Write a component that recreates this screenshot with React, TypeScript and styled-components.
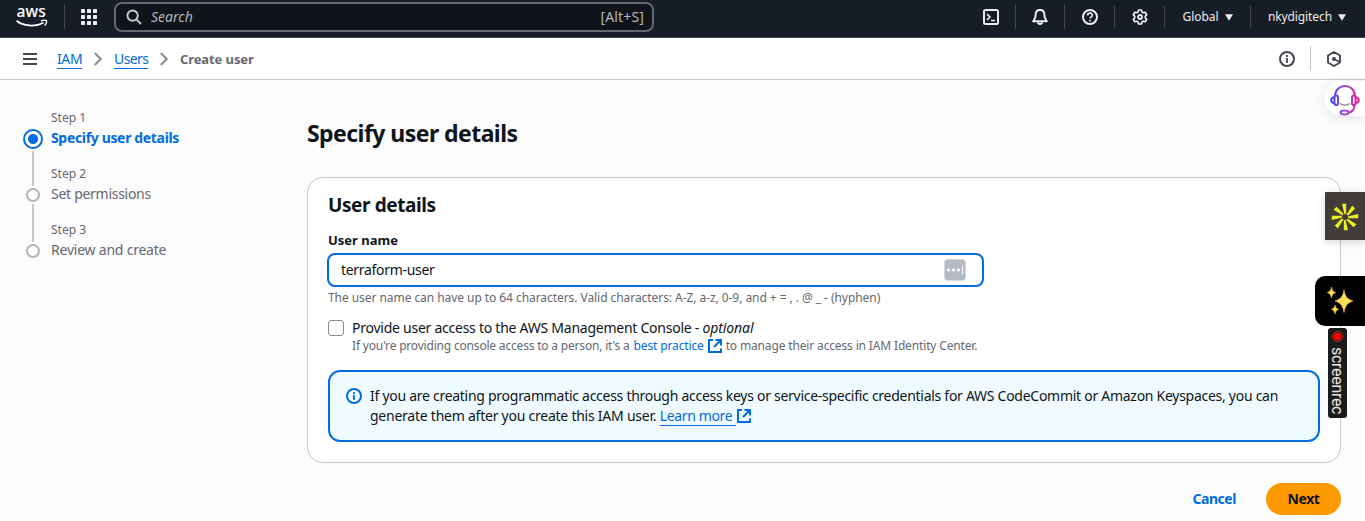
import React from "react";
import styled, { createGlobalStyle, css } from "styled-components";

const Global = createGlobalStyle`
  * { box-sizing: border-box; }
  html, body { margin: 0; background: #fcfcfd; overflow: hidden; }
  body { font-family: "Noto Sans", "Open Sans", sans-serif; font-size: 14px; line-height: 20px; color: #0f141a; }
  svg { display: block; flex: none; }
`;

const Page = styled.div`
  width: 1365px;
  height: 521px;
  overflow: hidden;
  display: flex;
  flex-direction: column;
`;

const Label = styled.span<{ $size?: number; $track?: number; $weight?: number; $color?: string; $italic?: boolean }>`
  white-space: nowrap;
  font-size: ${(p) => p.$size ?? 13}px;
  letter-spacing: ${(p) => p.$track ?? 0}px;
  font-weight: ${(p) => p.$weight ?? 400};
  font-style: ${(p) => (p.$italic ? "italic" : "normal")};
  ${(p) => p.$color && css`color: ${p.$color};`}
`;

const TopBar = styled.header`
  height: 38px;
  flex: none;
  background: #161d26;
  border-bottom: 1px solid #424650;
  display: flex;
  align-items: center;
  padding: 0 19px 3px 16px;
  color: #ebebf0;
`;

const Rule = styled.i<{ $h?: number; $light?: boolean }>`
  width: 1px;
  height: ${(p) => p.$h ?? 24}px;
  background: ${(p) => (p.$light ? "#c6c6cd" : "#424650")};
`;

const AppsSlot = styled.div`
  margin: 0 17px 0 16px;
`;

const Search = styled.div`
  width: 540px;
  height: 30px;
  border: 2px solid #656871;
  border-radius: 8px;
  background: #0f141a;
  display: flex;
  align-items: center;
  gap: 9px;
  padding: 0 8px 0 10px;
  color: #b4b4bb;
`;

const Grow = styled.div`
  flex: 1;
`;

const Space = styled.div<{ $w: number }>`
  flex: 0 0 ${(p) => p.$w}px;
`;

const TopTools = styled.div`
  display: flex;
  align-items: center;
`;

const Tool = styled.div<{ $w: number }>`
  width: ${(p) => p.$w}px;
  display: flex;
  align-items: center;
  justify-content: center;
  gap: 6px;
`;

const Crumbs = styled.nav`
  height: 42px;
  flex: none;
  background: #fff;
  border-bottom: 1px solid #c6c6cd;
  display: flex;
  align-items: center;
  padding: 0 23px;
`;

const CrumbLink = styled.a<{ $w: number }>`
  width: ${(p) => p.$w}px;
  height: 19px;
  line-height: 18px;
  margin-top: 2px;
  border-bottom: 1px solid #006ce0;
  color: #006ce0;
  white-space: nowrap;
`;

const CrumbList = styled.div`
  display: flex;
  align-items: center;
  gap: 11px;
  margin-left: 20px;
`;

const Body = styled.div`
  flex: 1;
  display: flex;
`;

const Steps = styled.aside`
  width: 307px;
  padding: 28px 0 0 23px;
`;

const Step = styled.div`
  height: 56px;
  display: grid;
  grid-template-columns: 20px 1fr;
  column-gap: 8px;
`;

const Marker = styled.div<{ $active?: boolean }>`
  display: flex;
  flex-direction: column;
  align-items: center;
  padding-top: ${(p) => (p.$active ? 21 : 24)}px;
`;

const Dot = styled.i<{ $active?: boolean }>`
  width: ${(p) => (p.$active ? 20 : 14)}px;
  height: ${(p) => (p.$active ? 20 : 14)}px;
  flex: none;
  border-radius: 50%;
  border: 2px solid ${(p) => (p.$active ? "#006ce0" : "#b4b4bb")};
  background: ${(p) => (p.$active ? "radial-gradient(circle, #006ce0 4.6px, #fff 5.4px)" : "#fff")};
`;

const Connector = styled.i<{ $h: number }>`
  width: 2px;
  height: ${(p) => p.$h}px;
  margin-top: 2px;
  margin-bottom: -30px;
  flex: none;
  background: #c6c6cd;
`;

const StepText = styled.div`
  display: flex;
  flex-direction: column;
`;

const Main = styled.main`
  width: 1034px;
  display: flex;
  flex-direction: column;
`;

const Title = styled.h1`
  margin: 38px 0 0;
  height: 59px;
  line-height: 30px;
  font-weight: 400;
  font-size: 24px;
`;

const Card = styled.section`
  height: 286px;
  border: 1px solid #c6c6cd;
  border-radius: 16px;
  background: #fff;
  padding: 14px 20px 0;
  display: flex;
  flex-direction: column;
`;

const CardTitle = styled.h2`
  margin: 0;
  height: 38px;
  line-height: 24px;
  font-weight: 400;
`;

const FieldLabel = styled.div`
  height: 23px;
`;

const Input = styled.div`
  width: 657px;
  height: 34px;
  margin-left: -1px;
  border: 2px solid #006ce0;
  border-radius: 8px;
  display: flex;
  align-items: center;
  justify-content: space-between;
  padding: 0 16px 0 12px;
`;

const Hint = styled.div`
  height: 33px;
  line-height: 16px;
  padding-top: 2px;
`;

const CheckRow = styled.div`
  height: 50px;
  display: flex;
  gap: 8px;
`;

const Checkbox = styled.i`
  width: 16px;
  height: 16px;
  border: 1px solid #8c8c94;
  border-radius: 3px;
  background: #fff;
`;

const CheckText = styled.div`
  display: flex;
  flex-direction: column;
  margin-top: -2px;
`;

const Line = styled.div<{ $h?: number; $gap?: number }>`
  display: flex;
  align-items: center;
  height: ${(p) => p.$h ?? 20}px;
  line-height: ${(p) => p.$h ?? 20}px;
  gap: ${(p) => p.$gap ?? 0}px;
`;

const Alert = styled.div`
  width: 992px;
  height: 72px;
  border: 2px solid #006ce0;
  border-radius: 12px;
  background: #f0fbff;
  display: flex;
  gap: 8px;
  padding: 14px 16px;
`;

const LearnMore = styled.a`
  height: 20px;
  width: 76px;
  margin-right: 1px;
  border-bottom: 1px solid #006ce0;
  color: #006ce0;
  line-height: 19px;
`;

const Actions = styled.div`
  height: 52px;
  padding-top: 20px;
  display: flex;
  justify-content: flex-end;
  align-items: center;
  gap: 30px;
`;

const NextButton = styled.button`
  width: 75px;
  height: 32px;
  padding: 0 0 1px;
  border: 0;
  border-radius: 16px;
  background: #ff9900;
  font-family: inherit;
  color: #0f141a;
`;

const Floating = styled.div<{ $top: number; $left: number }>`
  position: absolute;
  top: ${(p) => p.$top}px;
  left: ${(p) => p.$left}px;
  display: flex;
  align-items: center;
  justify-content: center;
`;

const SupportTab = styled(Floating)`
  width: 41px;
  height: 35px;
  padding-top: 3px;
  border-radius: 18px 0 0 18px;
  background: #fff;
  box-shadow: 0 2px 10px rgba(0, 0, 0, 0.1);
`;

const BurstTab = styled(Floating)`
  width: 40px;
  height: 48px;
  padding-top: 1px;
  background: #403c39;
  box-shadow: 0 2px 8px rgba(0, 0, 0, 0.16);
`;

const SparkTab = styled(Floating)`
  width: 50px;
  height: 50px;
  border-radius: 10px 0 0 10px;
  background: #000;
`;

const RecTab = styled(Floating)`
  width: 19px;
  height: 90px;
  border-radius: 3px;
  background: #1b1b1b;
  flex-direction: column;
  justify-content: flex-start;
  padding-top: 3px;
  gap: 5px;
`;

const RecText = styled.span`
  writing-mode: vertical-rl;
  line-height: 19px;
  font-family: Roboto, sans-serif;
  font-size: 16px;
  letter-spacing: -0.3px;
  color: #e6e6e6;
  white-space: nowrap;
`;

const AwsLogo = () => (
  <svg width="32" height="34" viewBox="0 -6 32 34">
    <text x="0.6" y="11.400" fontFamily="Noto Sans" fontSize="16" fontWeight="500" fill="#fff" textLength="29.200" lengthAdjust="spacingAndGlyphs">aws</text>
    <path d="M0.600 14.800C7 20.200 19.500 21.200 27.500 16.700" fill="none" stroke="#fff" strokeWidth="1.800" />
    <path d="M25 15c2-.9 4.600-.9 5.400-.4.4 1.200-.3 3.600-1.800 5" fill="none" stroke="#fff" strokeWidth="1.400" />
  </svg>
);

const AppsIcon = () => (
  <svg width="16" height="16" viewBox="0 0 16 16" fill="#ebebf0">
    {[0, 6, 12].map((y) => [0, 6, 12].map((x) => <rect key={`${x}-${y}`} x={x} y={y} width="4" height="4" rx=".4" />))}
  </svg>
);

type IconProps = { color?: string; children: React.ReactNode; size?: number };
const Icon = ({ color = "#ebebf0", size = 16, children }: IconProps) => (
  <svg width={size} height={size} viewBox="0 0 16 16" fill="none" stroke={color} strokeWidth="2" strokeLinejoin="round">
    {children}
  </svg>
);

const InfoIcon = ({ color }: { color: string }) => (
  <Icon color={color}>
    <circle cx="8" cy="8" r="7" />
    <path d="M8 7v5M8 4v2" strokeWidth="1.8" />
  </Icon>
);

const ExternalIcon = () => (
  <svg width="14" height="14" viewBox="0 0 14 14" fill="none" stroke="#006ce0" strokeWidth="2">
    <path d="M5 1H1v12h12V9.500M7.500 1H13v5.500M13 1 6 8" />
  </svg>
);

const Chevron = () => (
  <svg width="10" height="16" viewBox="0 0 10 16" fill="none" stroke="#8c8c94" strokeWidth="2">
    <path d="M1.800 2l6 6-6 6" />
  </svg>
);

const Caret = () => (
  <svg width="8" height="7" viewBox="0 0 8 7" fill="#ebebf0"><path d="M0 .3h8L4 6.800z" /></svg>
);

const steps = [
  { name: "Step 1", title: "Specify user details", track: -0.34 },
  { name: "Step 2", title: "Set permissions", track: -0.28 },
  { name: "Step 3", title: "Review and create", track: -0.22 },
];

export default function App() {
  return (
    <Page>
      <Global />
      <TopBar>
        <AwsLogo />
        <Space $w={16} />
        <Rule />
        <AppsSlot><AppsIcon /></AppsSlot>
        <Search>
          <Icon color="#c6c6cd">
            <circle cx="6.600" cy="6.600" r="5.200" />
            <path d="M10.400 10.400 15 15" />
          </Icon>
          <Label $italic $size={14}>Search</Label>
          <Grow />
          <Label $size={14} $track={0.15}>[Alt+S]</Label>
        </Search>
        <Grow />
        <TopTools>
          <Tool $w={48}>
            <Icon><rect x="1" y="1" width="14" height="14" rx="1.500" /><path d="M4 5l3 3-3 3M8 11.500h4" strokeWidth="1.700" /></Icon>
          </Tool>
          <Rule />
          <Tool $w={48}>
            <Icon><path d="M8 1C5.200 1 3.700 3 3.700 5.500 3.700 9 2.500 10 1.200 12.300h13.600C13.500 10 12.300 9 12.300 5.500 12.300 3 10.800 1 8 1z" strokeWidth="1.900" /><path d="M5.800 13.200c.3 2.400 4.100 2.400 4.400 0" strokeWidth="1.800" /></Icon>
          </Tool>
          <Rule />
          <Tool $w={49}>
            <Icon><circle cx="8" cy="8" r="7" /><path d="M5.600 6.400C5.600 3.400 10.400 3.400 10.400 6.200 10.400 7.800 8 7.800 8 9.600M8 10.700v1.800" strokeWidth="1.600" /></Icon>
          </Tool>
          <Rule $h={22} />
          <Tool $w={49}>
            <Icon>
              <path d="M6.600 1h2.800l.5 1.900 1.400.8 1.900-.5 1.500 2.500-1.400 1.400v1.800l1.400 1.400-1.500 2.500-1.900-.5-1.400.8-.5 1.900H6.600l-.5-1.900-1.400-.8-1.900.5-1.500-2.500 1.400-1.400V7.100L1.300 5.700l1.500-2.500 1.900.5 1.400-.8z" strokeWidth="1.700" />
              <circle cx="8" cy="8" r="2" strokeWidth="1.800" />
            </Icon>
          </Tool>
          <Rule $h={22} />
          <Tool $w={85}><Label $size={12} $track={-0.05}>Global</Label><Caret /></Tool>
          <Rule $h={22} />
          <Tool $w={95}><Grow /><Label $size={12} $track={-0.1}>nkydigitech</Label><Caret /></Tool>
        </TopTools>
      </TopBar>

      <Crumbs>
        <svg width="14" height="12" viewBox="0 0 14 12" fill="#424650"><path d="M0 0h14v2H0zM0 5h14v2H0zM0 10h14v2H0z" /></svg>
        <CrumbList>
          <CrumbLink $w={25}><Label $size={14} $track={-0.4}>IAM</Label></CrumbLink>
          <Chevron />
          <CrumbLink $w={34}><Label $size={14} $track={-0.6}>Users</Label></CrumbLink>
          <Chevron />
          <Label $size={13} $weight={700} $track={-0.1} $color="#656871">Create user</Label>
        </CrumbList>
        <Grow />
        <InfoIcon color="#424650" />
        <Space $w={15} />
        <Rule $h={25} $light />
        <Space $w={15} />
        <Icon color="#424650">
          <path d="M8 1l6 3.500v7L8 15l-6-3.500v-7z" strokeWidth="1.900" />
          <circle cx="8" cy="8" r="2" fill="#424650" stroke="none" />
          <path d="M8 8l5.500 3" strokeWidth="1.800" />
        </Icon>
      </Crumbs>

      <Body>
        <Steps>
          {steps.map((s, i) => (
            <Step key={s.name}>
              <Marker $active={i === 0}>
                <Dot $active={i === 0} />
                {i < 2 && <Connector $h={i === 0 ? 35 : 38} />}
              </Marker>
              <StepText>
                <Label $size={12} $color="#656871">{s.name}</Label>
                <Label $size={14} $weight={i === 0 ? 700 : 400} $color={i === 0 ? "#006ce0" : "#656871"} $track={s.track}>{s.title}</Label>
              </StepText>
            </Step>
          ))}
        </Steps>

        <Main>
          <Title><Label $size={23} $weight={700} $track={-0.55}>Specify user details</Label></Title>
          <Card>
            <CardTitle><Label $size={19} $weight={700} $track={-0.4}>User details</Label></CardTitle>
            <FieldLabel><Label $size={13} $weight={700}>User name</Label></FieldLabel>
            <Input>
              <Label $size={14} $track={-0.3}>terraform-user</Label>
              <svg width="22" height="22" viewBox="0 0 22 22">
                <rect x=".5" y=".5" width="21" height="21" rx="3" fill="#b4bbc5" stroke="#d5d9df" />
                <g fill="#fff"><circle cx="4.500" cy="11" r="1.500" /><circle cx="9.500" cy="11" r="1.500" /><circle cx="14.500" cy="11" r="1.500" /><rect x="18" y="7" width="1" height="8" /></g>
              </svg>
            </Input>
            <Hint><Label $size={12} $track={-0.06} $color="#656871">The user name can have up to 64 characters. Valid characters: A-Z, a-z, 0-9, and + = , . @ _ - (hyphen)</Label></Hint>
            <CheckRow>
              <Checkbox />
              <CheckText>
                <Line>
                  <Label $size={14} $track={-0.25}>Provide user access to the AWS Management Console -&nbsp;</Label>
                  <Label $size={14} $track={-0.1} $italic>optional</Label>
                </Line>
                <Line $h={16} $gap={4}>
                  <Label $size={12} $track={-0.19} $color="#656871">If you're providing console access to a person, it's a</Label>
                  <Label $size={12} $track={-0.14} $color="#006ce0">best practice</Label>
                  <ExternalIcon />
                  <Label $size={12} $track={-0.15} $color="#656871">to manage their access in IAM Identity Center.</Label>
                </Line>
              </CheckText>
            </CheckRow>
            <Alert>
              <Line><InfoIcon color="#006ce0" /></Line>
              <div>
                <Line><Label $size={14} $track={-0.275}>If you are creating programmatic access through access keys or service-specific credentials for AWS CodeCommit or Amazon Keyspaces, you can</Label></Line>
                <Line>
                  <Label $size={14} $track={-0.24}>generate them after you create this IAM user.&nbsp;</Label>
                  <LearnMore><Label $size={14} $track={-0.35}>Learn more</Label></LearnMore>
                  <ExternalIcon />
                </Line>
              </div>
            </Alert>
          </Card>
          <Actions>
            <Label $size={14} $weight={700} $track={-0.45} $color="#006ce0">Cancel</Label>
            <NextButton><Label $size={14} $weight={700} $track={-0.45}>Next</Label></NextButton>
          </Actions>
        </Main>
      </Body>

      <SupportTab $top={81} $left={1324}>
        <svg width="30" height="32" viewBox="0 0 30 32" fill="none" strokeWidth="2">
          <defs><linearGradient id="hs" x1="0" x2="30" gradientUnits="userSpaceOnUse"><stop stopColor="#3b4bf5" /><stop offset=".5" stopColor="#9a45e0" /><stop offset="1" stopColor="#f0207c" /></linearGradient></defs>
          <g stroke="url(#hs)">
            <path d="M5 12C5.500-1.500 24.500-1.500 25 12" />
            <rect x="4.500" y="11.500" width="3.500" height="9.500" rx="1.800" />
            <rect x="22" y="11.500" width="3.500" height="9.500" rx="1.800" />
            <path d="M4.500 13c-4.500 1.500-4.500 5 0 6.500M25.500 13c4.500 1.500 4.500 5 0 6.500M24.500 21c0 4-2 7-6 7.500" />
            <ellipse cx="14.500" cy="28.500" rx="4" ry="2" />
          </g>
          <path d="M10 19.500c3 2 7 2 10 0" stroke="#777" strokeWidth="1.200" />
        </svg>
      </SupportTab>
      <BurstTab $top={192} $left={1325}>
        <svg width="28" height="28" viewBox="-14 -14 28 28" fill="#eaf21a">
          {[0, 45, 90, 135, 180, 225, 270, 315].map((a) => (
            <path key={a} transform={`rotate(${a})`} d="M-3-13.200L1.200-13.200L1.200-3.400L-.5-2.600z" />
          ))}
        </svg>
      </BurstTab>
      <SparkTab $top={276} $left={1315}>
        <svg width="28" height="30" viewBox="0 0 28 30" fill="#ffe05a" stroke="#f7b52c" strokeWidth=".6">
          <path d="M18 4c1.200 6.500 3 9 9 11-6 2-7.800 5-9 11.500C16.800 20 15 17 9 15c6-2 7.800-4.500 9-11z" />
          <path d="M5.500 1c.6 3.400 1.500 4.500 4.200 5.500C7 7.500 6.100 8.800 5.500 12 4.900 8.800 4 7.500 1.300 6.500 4 5.500 4.900 4.400 5.500 1z" />
          <path d="M9 19c.5 2.500 1.300 3.500 3.600 4.300C10.300 24.100 9.500 25.400 9 28c-.5-2.600-1.300-3.900-3.600-4.700C7.700 22.500 8.500 21.500 9 19z" />
        </svg>
      </SparkTab>
      <RecTab $top={328} $left={1328}>
        <svg width="11" height="11" viewBox="0 0 11 11"><circle cx="5.500" cy="5.500" r="5" fill="none" stroke="#c33" strokeWidth=".9" /><circle cx="5.500" cy="5.500" r="3.800" fill="#f00" /></svg>
        <RecText>screenrec</RecText>
      </RecTab>
    </Page>
  );
}
